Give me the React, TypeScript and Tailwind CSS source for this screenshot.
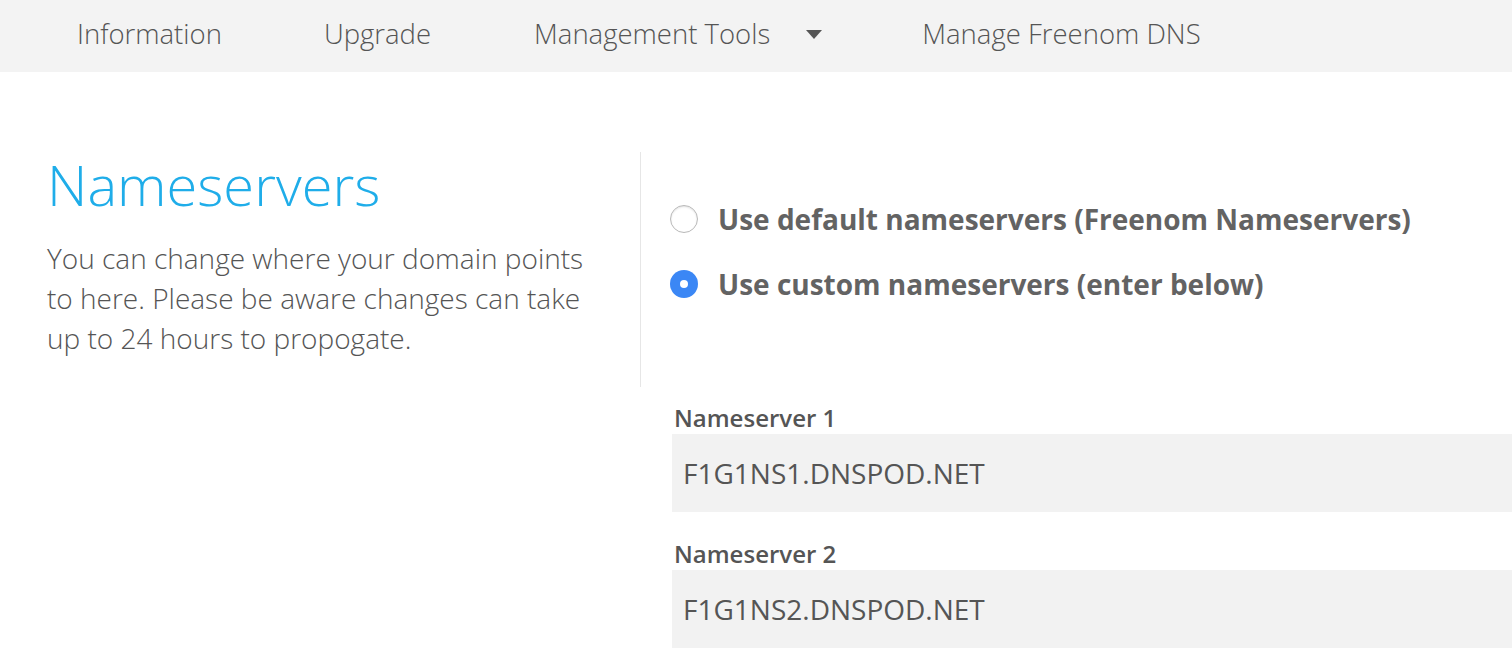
import { useState } from 'react'

const font = { fontFamily: '"Open Sans", "Liberation Sans", sans-serif' }

function Radio({ checked }: { checked: boolean }) {
  if (checked) {
    return (
      <span className="w-[28px] h-[28px] rounded-full bg-[#3b87f5] flex items-center justify-center shrink-0">
        <span className="w-[8px] h-[8px] rounded-full bg-white" />
      </span>
    )
  }
  return (
    <span className="w-[28px] h-[28px] rounded-full border border-[#b9b9b9] bg-white shadow-[inset_0_1px_2px_rgba(0,0,0,0.12)] shrink-0" />
  )
}

export default function App() {
  const [mode, setMode] = useState<'default' | 'custom'>('custom')
  const servers = ['F1G1NS1.DNSPOD.NET', 'F1G1NS2.DNSPOD.NET']

  return (
    <div className="w-[1512px] h-[670px] bg-white overflow-hidden" style={font}>
      <nav className="h-[72px] bg-[#f3f3f3] flex items-center pb-[5px] pl-[77px] text-[27.5px] font-light text-[#555]">
        <span>Information</span>
        <span className="ml-[102px]">Upgrade</span>
        <span className="ml-[103px] flex items-center gap-[36px]">
          Management Tools
          <svg width="16" height="9" viewBox="0 0 16 9" className="mt-[2px]"><path d="M0 0h16L8 9z" fill="#555" /></svg>
        </span>
        <span className="ml-[100px]">Manage Freenom DNS</span>
      </nav>

      <div className="flex pt-[80px]">
        <div className="w-[640px] pl-[47px] shrink-0">
          <h1 className="text-[56px] font-light text-[#1fade9] leading-[64px]">Nameservers</h1>
          <p className="mt-[22px] w-[550px] text-[28px] font-light leading-[40px] text-[#555]">
            You can change where your domain points to here. Please be aware changes can take up to 24 hours to propogate.
          </p>
        </div>
        <div className="flex-1">
          <div className="border-l border-[#e6e6e6] h-[235px] pl-[29px] pt-[48px] flex flex-col gap-[27px]">
            <label className="h-[38px] flex items-center gap-[20px] cursor-pointer" onClick={() => setMode('default')}>
              <Radio checked={mode === 'default'} />
              <span className="text-[28px] font-bold text-[#636363]">Use default nameservers (Freenom Nameservers)</span>
            </label>
            <label className="h-[38px] flex items-center gap-[20px] cursor-pointer" onClick={() => setMode('custom')}>
              <Radio checked={mode === 'custom'} />
              <span className="text-[28px] font-bold text-[#636363]">Use custom nameservers (enter below)</span>
            </label>
          </div>
          <div className="pl-[32px] pt-[14px] flex flex-col gap-[25px]">
            {servers.map((s, i) => (
              <div key={s}>
                <div className="text-[24px] font-semibold text-[#555] leading-[33px] pl-[2px]">Nameserver {i + 1}</div>
                <div className="h-[78px] bg-[#f2f2f2] flex items-center px-[11px] text-[28px] text-[#555]">{s}</div>
              </div>
            ))}
          </div>
        </div>
      </div>
    </div>
  )
}
